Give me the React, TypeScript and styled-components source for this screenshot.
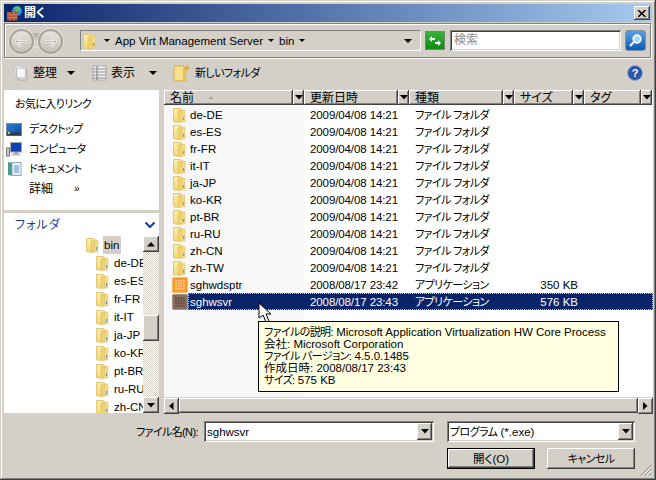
import React from "react";
import styled, { createGlobalStyle, css } from "styled-components";

const Global = createGlobalStyle`
  html, body { margin: 0; padding: 0; background: #d4d0c8; overflow: hidden; }
  * { box-sizing: border-box; }
`;

const raised = css`
  background-color: #d4d0c8;
  box-shadow: inset -1px -1px #404040, inset 1px 1px #fff, inset -2px -2px #808080, inset 2px 2px #d4d0c8;
`;
const sunken = css`
  box-shadow: inset 1px 1px #808080, inset -1px -1px #fff, inset 2px 2px #404040, inset -2px -2px #d4d0c8;
`;
const narrow = css`
  font-size: 11px;
  letter-spacing: -0.6px;
`;

const Window = styled.div`
  position: relative;
  width: 656px;
  height: 480px;
  padding: 4px;
  background: #d4d0c8;
  color: #000;
  font: 11.5px/14px "Liberation Sans", "Noto Sans CJK JP", sans-serif;
  font-feature-settings: "palt";
  display: flex;
  flex-direction: column;
  box-shadow: inset -1px -1px #404040, inset 1px 1px #d4d0c8, inset -2px -2px #808080, inset 2px 2px #fff;
  overflow: hidden;
`;
const Kana = styled.span`${narrow};`;
const TitleBar = styled.div`
  height: 18px;
  flex: none;
  display: flex;
  align-items: center;
  padding: 0 2px 0 3px;
  gap: 1px;
  background: linear-gradient(90deg, #0a246a, #a6caf0);
  color: #fff;
  font-weight: 700;
  font-size: 12px;
`;
const TitleText = styled.span`flex: 1;`;
const CloseButton = styled.div`
  ${raised};
  width: 16px;
  height: 14px;
  display: flex;
  align-items: center;
  justify-content: center;
`;
const NavBar = styled.div`
  margin-top: 1px;
  height: 35px;
  width: 647px;
  flex: none;
  display: flex;
  align-items: center;
  padding: 0 5px 0 4px;
  border: 1px solid #808080;
  box-shadow: inset 1px 1px #fff, 1px 1px #fff;
`;
const Round = styled.div`
  width: 25px;
  height: 25px;
  border-radius: 50%;
  background: linear-gradient(#e6e4de, #c3bfb7);
  border: 2px solid #a8a49c;
  box-shadow: 0 0 0 1px #e4e2dc;
  display: flex;
  align-items: center;
  justify-content: center;
`;
const RoundGroup = styled.div`
  display: flex;
  gap: 4px;
  width: 54px;
  padding: 1px 0 0 0;
  flex: none;
  background: linear-gradient(#b4b0a8, #dedcd6) no-repeat center / 20px 15px;
`;
const Address = styled.div`
  margin-left: 17px;
  width: 341px;
  height: 21px;
  flex: none;
  display: flex;
  align-items: center;
  padding: 0 8px 0 1px;
  border-top: 1px solid #808080;
  border-left: 1px solid #808080;
  border-bottom: 1px solid #fff;
  border-right: 1px solid #fff;
`;
const Crumb = styled.span<{ $first?: boolean }>`
  display: inline-flex;
  align-items: center;
  gap: 5px;
  margin-left: ${(p) => (p.$first ? 8 : 5)}px;
  white-space: nowrap;
`;
const Caret = styled.i<{ $size?: number }>`
  display: inline-block;
  width: 0;
  height: 0;
  border-style: solid;
  border-width: ${(p) => p.$size ?? 3}px ${(p) => p.$size ?? 3}px 0;
  border-color: #000 transparent transparent;
`;
const Spring = styled.div`flex: 1;`;
const Refresh = styled.div`
  width: 20px;
  height: 19px;
  margin-left: 4px;
  flex: none;
  border: 1px solid #6e8a6a;
  background: linear-gradient(#35b43a, #0f8a17);
  display: flex;
  align-items: center;
  justify-content: center;
`;
const SearchBox = styled.div`
  ${sunken};
  margin-left: 5px;
  width: 171px;
  height: 21px;
  flex: none;
  background: #fff;
  color: #8a8a8a;
  padding: 3px 0 0 4px;
  font-size: 12px;
`;
const SearchBtn = styled.div`
  margin-left: 4px;
  width: 21px;
  height: 21px;
  flex: none;
  border: 1px solid #7d8ea8;
  border-radius: 3px;
  background: linear-gradient(#5b9fe0, #0b5cb8);
  display: flex;
  align-items: center;
  justify-content: center;
`;
const Toolbar = styled.div`
  height: 32px;
  flex: none;
  display: flex;
  align-items: center;
  padding: 0 9px 2px 10px;
  font-size: 12px;
`;
const Tool = styled.div<{ $w: number }>`
  display: flex;
  align-items: center;
  width: ${(p) => p.$w}px;
  gap: 4px;
  flex: none;
  white-space: nowrap;
`;
const ToolCaret = styled.span<{ $ml: number }>`
  margin-left: ${(p) => p.$ml}px;
  display: inline-flex;
`;
const Main = styled.div`
  height: 323px;
  flex: none;
  display: flex;
  gap: 5px;
`;
const LeftCol = styled.div`
  width: 155px;
  flex: none;
  display: flex;
  flex-direction: column;
`;
const Favourites = styled.div`
  height: 120px;
  flex: none;
  background: #fff;
  padding: 7px 0 0 11px;
`;
const FavTitle = styled.div`
  ${narrow};
  margin-bottom: 8px;
`;
const FavLink = styled.div`
  display: flex;
  align-items: center;
  height: 20px;
  margin-left: -9px;
  gap: 7px;
  ${narrow};
`;
const FavIconSlot = styled.span`
  width: 16px;
  height: 16px;
  display: inline-flex;
  align-items: center;
  justify-content: center;
`;
const DetailText = styled.span`
  font-size: 12px;
  letter-spacing: 0;
`;
const MoreMark = styled.span`
  margin-left: 14px;
  font-size: 10px;
`;
const FolderPane = styled.div`
  margin-top: 3px;
  flex: 1;
  background: #fff;
  display: flex;
  flex-direction: column;
  min-height: 0;
`;
const FolderHeader = styled.div`
  height: 23px;
  flex: none;
  display: flex;
  align-items: center;
  justify-content: space-between;
  padding: 0 3px 0 11px;
  color: #1a3f9a;
  font-size: 12px;
  letter-spacing: 1px;
`;
const TreeWrap = styled.div`
  flex: 1;
  display: flex;
  min-height: 0;
`;
const Tree = styled.div`
  flex: 1;
  overflow: hidden;
`;
const TreeRow = styled.div<{ $indent: number }>`
  height: 18px;
  display: flex;
  align-items: center;
  padding-left: ${(p) => p.$indent}px;
  white-space: nowrap;
  gap: 4px;
`;
const TreeLabel = styled.span<{ $active?: boolean }>`
  padding: 2px 2px 2px 1px;
  background: ${(p) => (p.$active ? "#d4d0c8" : "transparent")};
`;
const VScroll = styled.div`
  width: 16px;
  flex: none;
  display: flex;
  flex-direction: column;
  background-image: conic-gradient(#d4d0c8 25%, #fff 0 50%, #d4d0c8 0 75%, #fff 0);
  background-size: 2px 2px;
`;
const ScrollBtn = styled.div`
  ${raised};
  width: 16px;
  height: 16px;
  flex: none;
  display: flex;
  align-items: center;
  justify-content: center;
`;
const HScrollBtn = styled(ScrollBtn)`
  width: 15px;
`;
const ScrollThumb = styled.div`
  ${raised};
  height: 26px;
  flex: none;
  margin-top: 63px;
`;
const VSpace = styled.div`flex: 1;`;
const ListPane = styled.div`
  position: relative;
  flex: 1;
  margin-right: -1px;
  min-width: 0;
  background: #fff;
  display: flex;
  flex-direction: column;
`;
const Header = styled.div`
  height: 15px;
  flex: none;
  display: flex;
  font-size: 12px;
`;
const HeadCell = styled.div<{ $w: number }>`
  ${raised};
  width: ${(p) => p.$w}px;
  flex: none;
  display: flex;
  align-items: center;
  padding: 0 0 0 6px;
  gap: 14px;
`;
const HeadDrop = styled.div`
  ${raised};
  width: 11px;
  flex: none;
  display: flex;
  align-items: center;
  justify-content: center;
`;
const SortMark = styled.i`
  width: 0;
  height: 0;
  border-style: solid;
  border-width: 0 3px 3px;
  border-color: transparent transparent #a8a8a8;
`;
const Rows = styled.div`
  flex: 1;
  padding-top: 1px;
  background: linear-gradient(90deg, #f7f7f7 140px, #fff 140px);
`;
const Row = styled.div`
  height: 17px;
  display: flex;
`;
const IconCell = styled.div`
  width: 24px;
  flex: none;
  padding-left: 8px;
  display: flex;
  align-items: center;
`;
const RowBody = styled.div<{ $selected?: boolean }>`
  flex: 1;
  display: grid;
  grid-template-columns: 122px 105px 105px 58px;
  align-items: center;
  color: ${(p) => (p.$selected ? "#fff" : "#000")};
  background: ${(p) => (p.$selected ? "#0a246a" : "transparent")};
  outline: ${(p) => (p.$selected ? "1px dotted #d8c98a" : "none")};
  outline-offset: -1px;
  white-space: nowrap;
`;
const NameText = styled.span`
  padding-left: 2px;
`;
const DateText = styled.span`
  letter-spacing: -0.1px;
`;
const SizeText = styled.span`
  text-align: right;
`;
const HScroll = styled.div`
  height: 16px;
  flex: none;
  display: flex;
  border-top: 1px solid #d4d0c8;
`;
const HThumb = styled.div`
  ${raised};
  flex: 1;
`;
const Tip = styled.div`
  position: absolute;
  left: 94px;
  top: 231px;
  width: 361px;
  height: 71px;
  background: #ffffe1;
  border: 1px solid #000;
  padding: 4px 0 0 5px;
  font-size: 11.5px;
  line-height: 12px;
  white-space: nowrap;
`;
const Pointer = styled.svg`
  position: absolute;
  left: 94px;
  top: 212px;
`;
const Footer = styled.div`
  flex: 1;
  display: grid;
  grid-template-columns: 200px 230px 201px;
  grid-template-rows: 21px 21px;
  row-gap: 6px;
  padding: 8px 0 0 0;
`;
const Label = styled.div`
  justify-self: end;
  align-self: center;
  padding-right: 6px;
  ${narrow};
  white-space: nowrap;
`;
const Combo = styled.div<{ $col: number; $ml?: number }>`
  ${sunken};
  grid-column: ${(p) => p.$col};
  margin-left: ${(p) => p.$ml ?? 0}px;
  background: #fff;
  display: flex;
  align-items: center;
  padding: 2px 2px 2px 3px;
`;
const ComboText = styled.span`flex: 1;`;
const ComboBtn = styled.div`
  ${raised};
  width: 15px;
  height: 17px;
  display: flex;
  align-items: center;
  justify-content: center;
`;
const Actions = styled.div`
  grid-column: 3;
  display: flex;
  gap: 12px;
  margin-left: 13px;
`;
const Btn = styled.div<{ $default?: boolean }>`
  ${raised};
  width: 88px;
  height: 21px;
  flex: none;
  display: flex;
  align-items: center;
  justify-content: center;
  font-size: 11.5px;
  ${(p) =>
    p.$default &&
    css`
      border: 1px solid #000;
    `}
`;
const Grip = styled.svg`
  position: absolute;
  right: 4px;
  bottom: 4px;
`;

const Folder = () => (
  <svg width={14} height={16} viewBox="0 0 14 16" style={{ flex: "none" }}>
    <defs>
      <linearGradient id="fold" x1="0" y1="0" x2="0" y2="1">
        <stop offset="0" stopColor="#fbf0b0" />
        <stop offset="1" stopColor="#f2d878" />
      </linearGradient>
    </defs>
    <path d="M1.500 1.500h7l1 1V15h-7a1 1 0 0 1-1-1z" fill="url(#fold)" stroke="#e0c878" />
    <path d="M6 3.500l3.500-1V15L6 15.500z" fill="#f0d270" stroke="#dcbb5c" strokeWidth="0.500" />
    <path d="M9.500 3h3a.5.5 0 0 1 .5.500V14.500a.5.5 0 0 1-.5.500h-3z" fill="#f2da84" stroke="#e0c878" strokeWidth="0.600" />
    <rect x="11" y="10" width="1.200" height="3" fill="#4aa8d8" />
  </svg>
);
const AppIcon = ({ dim }: { dim?: boolean }) => {
  const dots = [];
  for (let y = 0; y < 4; y++)
    for (let x = 0; x < 4; x++)
      dots.push(<rect key={`${x}${y}`} x={3 + x * 2.600} y={3 + y * 2.600} width="2" height="2" fill={dim ? "#6d5145" : "#ffc27a"} />);
  return (
    <svg width="16" height="16" viewBox="0 0 16 16" style={{ flex: "none" }}>
      <rect x="0.500" y="0.500" width="15" height="15" rx="1" fill={dim ? "#85705f" : "#f79a2c"} stroke={dim ? "#a09488" : "#fbb668"} />
      {dots}
    </svg>
  );
};
const TriUp = () => <svg width="8" height="5"><path d="M4 0l4 4.500H0z" /></svg>;
const TriDown = () => <svg width="8" height="5"><path d="M0 0h8L4 4.500z" /></svg>;
const TriLeft = () => <svg width="5" height="8"><path d="M4.500 0v8L0 4z" /></svg>;
const TriRight = () => <svg width="5" height="8"><path d="M0 0v8l4.500-4z" /></svg>;
const Arrow = ({ flip }: { flip?: boolean }) => (
  <svg width="15" height="13" viewBox="0 0 15 13" style={{ transform: flip ? "scaleX(-1)" : undefined }}>
    <path d="M7 1L2 6.500 7 12M2 6.500h11" fill="none" stroke="#f4f3f0" strokeWidth="2.400" />
    <path d="M7 1L2 6.500 7 12M2 6.500h11" fill="none" stroke="#aba79f" strokeWidth="0.700" />
  </svg>
);

const names = ["de-DE", "es-ES", "fr-FR", "it-IT", "ja-JP", "ko-KR", "pt-BR", "ru-RU", "zh-CN", "zh-TW"];
const treeNames = [...names.slice(0, 9)];
const heads: [string, number][] = [
  ["更新日時", 94],
  ["種類", 94],
  ["サイズ", 59],
  ["タグ", 57],
];

export default function App() {
  return (
    <Window>
      <Global />
      <TitleBar>
        <svg width="16" height="16" viewBox="0 0 16 16">
          <circle cx="10" cy="6" r="5" fill="#2f8fe6" />
          <path d="M7 3l4-2 3 3-4 3z" fill="#5cc35a" />
          <path d="M0 7h10.500v8.500H0z" fill="#a84a2c" />
          <path d="M0 9.800h10.500M0 12.600h10.500M3 7v2.800M7 7v2.800M5 9.800v2.800M9 9.800v2.800M3 12.600v3M7 12.600v3" stroke="#dc9a7c" strokeWidth="0.700" />
        </svg>
        <TitleText>開く</TitleText>
        <CloseButton>
          <svg width="8" height="7" viewBox="0 0 8 7">
            <path d="M0 0l7.500 7M7.500 0L0 7" stroke="#000" strokeWidth="1.500" />
          </svg>
        </CloseButton>
      </TitleBar>

      <NavBar>
        <RoundGroup>
          <Round><Arrow /></Round>
          <Round><Arrow flip /></Round>
        </RoundGroup>
        <Address>
          <Folder />
          <Crumb $first><Caret /> App Virt Management Server</Crumb>
          <Crumb><Caret /> bin</Crumb>
          <Crumb><Caret /></Crumb>
          <Spring />
          <Caret $size={4} />
        </Address>
        <Refresh>
          <svg width="14" height="12" viewBox="0 0 14 12">
            <path d="M1 4l3-3v2h3v2H4v2zM13 8l-3 3V9H7V7h3V5z" fill="#fff" />
          </svg>
        </Refresh>
        <SearchBox>検索</SearchBox>
        <SearchBtn>
          <svg width="15" height="15" viewBox="0 0 15 15">
            <circle cx="9" cy="6" r="3.800" fill="#a9d6f7" stroke="#fff" strokeWidth="1.700" />
            <path d="M6 9l-4 4" stroke="#fff" strokeWidth="2.200" />
          </svg>
        </SearchBtn>
      </NavBar>

      <Toolbar>
        <Tool $w={78}>
          <svg width="15" height="16" viewBox="0 0 15 16">
            <path d="M1 1h7l2 2v8H1z" fill="#fff" stroke="#b9c4d2" />
            <path d="M4 5h9v10H4z" fill="#e6e6e6" stroke="#aaa" />
            <path d="M2.500 3h9v10h-9z" fill="#f6f6f6" stroke="#bbb" />
          </svg>
          <span>整理</span>
          <ToolCaret $ml={6}><Caret $size={4} /></ToolCaret>
        </Tool>
        <Tool $w={81}>
          <svg width="15" height="16" viewBox="0 0 15 16">
            <rect x="1" y="1" width="13" height="14" fill="#f4f4f4" stroke="#aaa" />
            <path d="M1 4h13M1 7h13M1 10h13M1 13h13" stroke="#8b8b8b" />
            <path d="M5 1v14" stroke="#777" />
          </svg>
          <span>表示</span>
          <ToolCaret $ml={10}><Caret $size={4} /></ToolCaret>
        </Tool>
        <Tool $w={100}>
          <svg width="18" height="18" viewBox="0 0 18 18">
            <path d="M1 2h10v15H2a1 1 0 0 1-1-1z" fill="#f6e08c" stroke="#d2ae4c" />
            <path d="M11 6h2v11h-2z" fill="#e9c96a" stroke="#d2ae4c" strokeWidth="0.600" />
            <path d="M14 1l1 2 2 1-2 1-1 2-1-2-2-1 2-1z" fill="#f59c1a" />
          </svg>
          <Kana>新しいフォルダ</Kana>
        </Tool>
        <Spring />
        <svg width="16" height="16" viewBox="0 0 16 16">
          <circle cx="8" cy="8" r="7.500" fill="#2f55a8" stroke="#9aa8c6" />
          <text x="8" y="12" textAnchor="middle" fontSize="11" fontWeight="700" fill="#fff" fontFamily="Liberation Sans">?</text>
        </svg>
      </Toolbar>

      <Main>
        <LeftCol>
          <Favourites>
            <FavTitle>お気に入りリンク</FavTitle>
            <FavLink>
              <FavIconSlot>
                <svg width="16" height="13" viewBox="0 0 16 13">
                  <defs>
                    <linearGradient id="desk" x1="0" y1="0" x2="1" y2="1">
                      <stop offset="0" stopColor="#2a7fd0" />
                      <stop offset="1" stopColor="#12489a" />
                    </linearGradient>
                  </defs>
                  <rect x="0.500" y="0.500" width="15" height="12" fill="url(#desk)" stroke="#6f8ba6" />
                  <rect x="1" y="9.500" width="14" height="3" fill="#2a3a4a" />
                  <rect x="2" y="9" width="2" height="2" fill="#e8c040" />
                </svg>
              </FavIconSlot>
              デスクトップ
            </FavLink>
            <FavLink>
              <FavIconSlot>
                <svg width="16" height="15" viewBox="0 0 16 15">
                  <rect x="0.500" y="6" width="3" height="8" fill="#c9c9c9" stroke="#777" />
                  <rect x="4.500" y="0.500" width="11" height="9.500" fill="#0f3fb0" stroke="#a0a6b0" />
                  <rect x="7.500" y="10" width="5" height="2" fill="#aaa" />
                  <rect x="5.500" y="12" width="9" height="1.500" fill="#bbb" />
                </svg>
              </FavIconSlot>
              コンピュータ
            </FavLink>
            <FavLink>
              <FavIconSlot>
                <svg width="15" height="16" viewBox="0 0 15 16">
                  <path d="M1 1l5 1v13l-5-1z" fill="#4d9a8a" />
                  <rect x="5" y="1.500" width="9" height="13" fill="#eaf2f8" stroke="#8fa6b8" />
                  <path d="M7 5h5M7 7h5M7 9h5M7 11h5" stroke="#5a8fc0" />
                </svg>
              </FavIconSlot>
              ドキュメント
            </FavLink>
            <FavLink>
              <FavIconSlot />
              <DetailText>詳細</DetailText><MoreMark>»</MoreMark>
            </FavLink>
          </Favourites>
          <FolderPane>
            <FolderHeader>
              <span>フォルダ</span>
              <svg width="12" height="8" viewBox="0 0 12 8">
                <path d="M1.500 1.500L6 6l4.500-4.500" fill="none" stroke="#1a3f9a" strokeWidth="2" />
              </svg>
            </FolderHeader>
            <TreeWrap>
              <Tree>
                <TreeRow $indent={81}><Folder /><TreeLabel $active>bin</TreeLabel></TreeRow>
                {treeNames.map((n) => (
                  <TreeRow key={n} $indent={91}><Folder /><TreeLabel>{n}</TreeLabel></TreeRow>
                ))}
              </Tree>
              <VScroll>
                <ScrollBtn><TriUp /></ScrollBtn>
                <ScrollThumb />
                <VSpace />
                <ScrollBtn><TriDown /></ScrollBtn>
              </VScroll>
            </TreeWrap>
          </FolderPane>
        </LeftCol>

        <ListPane>
          <Header>
            <HeadCell $w={129}><span>名前</span><SortMark /></HeadCell>
            <HeadDrop><TriDown /></HeadDrop>
            {heads.map(([label, w]) => (
              <React.Fragment key={label}>
                <HeadCell $w={w}>{label}</HeadCell>
                <HeadDrop><TriDown /></HeadDrop>
              </React.Fragment>
            ))}
          </Header>
          <Rows>
            {names.map((n) => (
              <Row key={n}>
                <IconCell><Folder /></IconCell>
                <RowBody>
                  <NameText>{n}</NameText>
                  <DateText>2009/04/08 14:21</DateText>
                  <Kana>ファイル フォルダ</Kana>
                </RowBody>
              </Row>
            ))}
            <Row>
              <IconCell><AppIcon /></IconCell>
              <RowBody>
                <NameText>sghwdsptr</NameText>
                <DateText>2008/08/17 23:42</DateText>
                <Kana>アプリケーション</Kana>
                <SizeText>350 KB</SizeText>
              </RowBody>
            </Row>
            <Row>
              <IconCell><AppIcon dim /></IconCell>
              <RowBody $selected>
                <NameText>sghwsvr</NameText>
                <DateText>2008/08/17 23:43</DateText>
                <Kana>アプリケーション</Kana>
                <SizeText>576 KB</SizeText>
              </RowBody>
            </Row>
          </Rows>
          <HScroll>
            <HScrollBtn><TriLeft /></HScrollBtn>
            <HThumb />
            <HScrollBtn><TriRight /></HScrollBtn>
          </HScroll>
          <Pointer width="16" height="22" viewBox="0 0 16 22">
            <path d="M1 1v15l4-3 3 7 3-1-3-7h5z" fill="#fff" stroke="#000" />
          </Pointer>
          <Tip>
            <div><Kana>ファイルの説明:</Kana> Microsoft Application Virtualization HW Core Process</div>
            <div>会社: Microsoft Corporation</div>
            <div><Kana>ファイル バージョン:</Kana> 4.5.0.1485</div>
            <div>作成日時: 2008/08/17 23:43</div>
            <div><Kana>サイズ:</Kana> 575 KB</div>
          </Tip>
        </ListPane>
      </Main>

      <Footer>
        <Label>ファイル名(N):</Label>
        <Combo $col={2}>
          <ComboText>sghwsvr</ComboText>
          <ComboBtn><TriDown /></ComboBtn>
        </Combo>
        <Combo $col={3} $ml={13}>
          <ComboText><Kana>プログラム</Kana> (*.exe)</ComboText>
          <ComboBtn><TriDown /></ComboBtn>
        </Combo>
        <Actions>
          <Btn $default>開く(O)</Btn>
          <Btn><Kana>キャンセル</Kana></Btn>
        </Actions>
      </Footer>
      <Grip width="12" height="12" viewBox="0 0 12 12">
        <path d="M11.500 1L1 11.500M11.500 5L5 11.500M11.500 9L9 11.500" stroke="#808080" strokeWidth="1" />
        <path d="M11.500 2.500L2.500 11.500M11.500 6.500L6.500 11.500" stroke="#fff" strokeWidth="1" />
      </Grip>
    </Window>
  );
}
